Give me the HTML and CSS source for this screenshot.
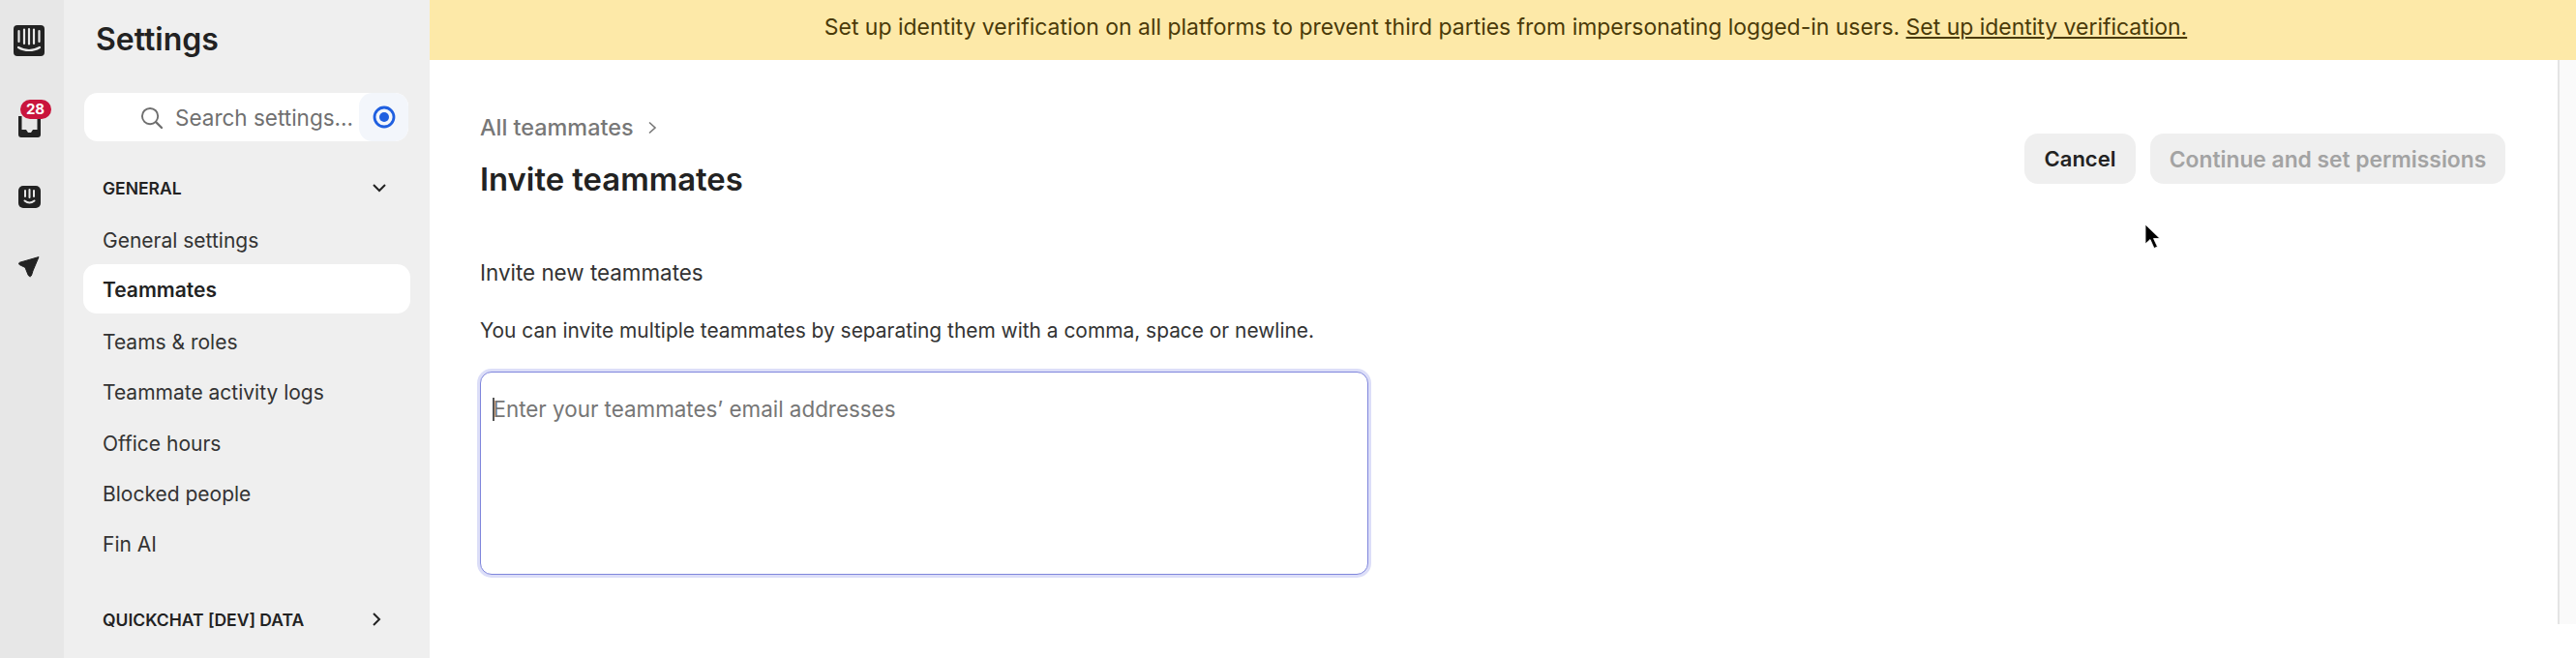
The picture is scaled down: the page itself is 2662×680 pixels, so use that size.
FILE: index.html
```html
<!DOCTYPE html>
<html lang="en">
<head>
<meta charset="utf-8">
<title>Settings</title>
<link rel="stylesheet" href="styles.css">
</head>
<body>
<div class="app">
  <nav class="rail">
    <svg class="rail-logo" viewBox="0 0 32 32" aria-hidden="true">
      <rect width="32" height="32" rx="4" fill="#222"/>
      <g stroke="#e7e7e7" stroke-width="2.2" stroke-linecap="round" fill="none">
        <path d="M5.5 6v11M11 4.5v14.5M16 4v15.5M21 4.5v14.5M26.500 6v11"/>
        <path d="M5 23c6.500 4 15.500 4 22 0"/>
      </g>
    </svg>
    <div class="rail-inbox">
      <svg class="rail-icon" viewBox="0 0 23 23" aria-hidden="true">
        <path d="M0 0h3.500v14h4.500l2 3h3l2-3h4.500V3H23v16a3 3 0 0 1-3 3H3a3 3 0 0 1-3-3z" fill="#222"/>
      </svg>
      <span class="badge">28</span>
    </div>
    <svg class="rail-icon rail-fin" viewBox="0 0 23 23" aria-hidden="true">
      <rect width="23" height="23" rx="5" fill="#222"/>
      <g stroke="#e7e7e7" stroke-width="2" stroke-linecap="round" fill="none">
        <path d="M7 5v6M11.500 4v8M16 5v6"/>
        <path d="M6.500 15.500c3 2.500 7 2.500 10 0"/>
      </g>
    </svg>
    <svg class="rail-icon rail-plane" viewBox="0 0 22 22" aria-hidden="true">
      <path d="M21 .6 1.500 6.200c-1.200.4-1.400 1.800-.3 2.400l5.800 2.800 3 7.500c.5 1.300 2.300 2.800 3.200 1.200 1-1.800 1.200-3.300 1.700-5z" fill="#222" stroke="#222" stroke-linejoin="round"/>
    </svg>
  </nav>

  <aside class="sidebar">
    <h1 class="sidebar-title">Settings</h1>
    <div class="search">
      <svg class="search-icon" viewBox="0 0 24 24" aria-hidden="true">
        <circle cx="10.500" cy="10.500" r="8.500" fill="none" stroke="#6f6f6f" stroke-width="2"/>
        <path d="M16.800 16.800 23 23" stroke="#6f6f6f" stroke-width="2.400" stroke-linecap="round"/>
      </svg>
      <span class="search-text">Search settings...</span>
      <span class="search-target">
        <svg viewBox="0 0 24 24" aria-hidden="true">
          <circle cx="12" cy="12" r="10" fill="none" stroke="#1f5fe0" stroke-width="2.800"/>
          <circle cx="12" cy="12" r="5" fill="#1f5fe0"/>
        </svg>
      </span>
    </div>
    <div class="section-head">
      <span>GENERAL</span>
      <svg class="chev" viewBox="0 0 14 14" aria-hidden="true"><path d="M1 4l6 6 6-6" fill="none" stroke="#222" stroke-width="2"/></svg>
    </div>
    <ul class="nav">
      <li>General settings</li>
      <li class="active">Teammates</li>
      <li>Teams &amp; roles</li>
      <li>Teammate activity logs</li>
      <li>Office hours</li>
      <li>Blocked people</li>
      <li>Fin AI</li>
    </ul>
    <div class="section-head section-data">
      <span>QUICKCHAT [DEV] DATA</span>
      <svg class="chev chev-right" viewBox="0 0 14 14" aria-hidden="true"><path d="M4 1l6 6-6 6" fill="none" stroke="#222" stroke-width="2"/></svg>
    </div>
  </aside>

  <div class="main">
    <div class="banner">
      <span>Set up identity verification on all platforms to prevent third parties from impersonating logged-in users. <a class="banner-link">Set up identity verification.</a></span>
    </div>
    <div class="body-row">
      <section class="content">
        <div class="head-row">
          <div>
            <div class="crumb">
              <span>All teammates</span>
              <svg viewBox="0 0 10 14" aria-hidden="true"><path d="M2 1.500 8 7l-6 5.500" fill="none" stroke="#777" stroke-width="1.600"/></svg>
            </div>
            <h2 class="page-title">Invite teammates</h2>
          </div>
          <div class="actions">
            <button class="btn btn-cancel" type="button">Cancel</button>
            <button class="btn btn-next" type="button">Continue and set permissions</button>
          </div>
        </div>
        <p class="label">Invite new teammates</p>
        <p class="hint">You can invite multiple teammates by separating them with a comma, space or newline.</p>
        <div class="field">
          <textarea class="input" placeholder="Enter your teammates’ email addresses"></textarea>
          <span class="caret"></span>
        </div>
      </section>
      <div class="scrolltrack"></div>
    </div>
    <svg class="cursor" viewBox="0 0 18 27" aria-hidden="true">
      <path d="M1 1v20l5-4.500 4 9 3.500-1.500-4-8.500H16z" fill="#000" stroke="#fff" stroke-width=".8"/>
    </svg>
  </div>
</div>
</body>
</html>
```
FILE: styles.css
```css
* { box-sizing: border-box; }
html, body { margin: 0; height: 100%; }
body {
  font-family: Inter, "Liberation Sans", sans-serif;
  color: #222;
  background: #fff;
  overflow: hidden;
}
.app { display: flex; width: 2662px; height: 680px; }

.rail {
  width: 66px;
  flex: none;
  background: #e7e7e7;
  display: flex;
  flex-direction: column;
  align-items: center;
  padding: 26px 6px 0 0;
}
.rail-logo { width: 32px; height: 32px; display: block; }
.rail-inbox { position: relative; width: 23px; height: 23px; margin-top: 62px; }
.rail-icon { width: 23px; height: 23px; display: block; }
.rail-fin { margin-top: 49px; }
.rail-plane { width: 22px; height: 22px; margin-top: 50px; }
.badge {
  position: absolute;
  left: 2px;
  top: -17px;
  width: 32px;
  height: 20px;
  border-radius: 10px;
  background: #c9143c;
  color: #fff;
  font-size: 15px;
  font-weight: 700;
  line-height: 20px;
  text-align: center;
}

.sidebar {
  width: 378px;
  flex: none;
  background: #efefef;
  padding: 0 20px;
}
.sidebar-title {
  margin: 0 0 0 13px;
  padding-top: 21px;
  font-size: 32px;
  line-height: 40px;
  font-weight: 600;
}
.search {
  margin-top: 35px;
  height: 50px;
  margin-left: 1px;
  margin-right: 2px;
  background: #fff;
  border-radius: 14px;
  display: flex;
  align-items: center;
  padding-left: 58px;
  overflow: hidden;
}
.search-icon { width: 23px; height: 23px; flex: none; }
.search-text { margin-left: 13px; font-size: 22.500px; color: #707070; flex: 1; white-space: nowrap; }
.search-target {
  width: 51px;
  height: 50px;
  flex: none;
  background: #f3f6fb;
  border-radius: 14px;
  display: flex;
  align-items: center;
  justify-content: center;
}
.search-target svg { width: 24px; height: 24px; display: block; }

.section-head {
  display: flex;
  align-items: center;
  justify-content: space-between;
  margin-top: 32px;
  padding: 0 25px 0 20px;
  height: 32px;
  font-size: 17.500px;
  font-weight: 600;
}
.chev { width: 14px; height: 14px; display: block; }
.section-data { margin-top: 34.500px; }
.chev-right { margin-right: 3px; }

.nav { list-style: none; margin: 12.500px 0 0; padding: 0; }
.nav li {
  height: 52.400px;
  line-height: 52px;
  padding-left: 20px;
  font-size: 21px;
  color: #333;
  border-radius: 14px;
}
.nav li.active {
  background: #fff;
  color: #222;
  font-weight: 600;
  height: 51.500px;
  line-height: 54px;
  margin: -2px 0 3.400px;
}

.main { flex: 1; min-width: 0; display: flex; flex-direction: column; position: relative; }
.banner {
  height: 62px;
  flex: none;
  background: #fde9a8;
  color: #4a3a08;
  font-size: 22.950px;
  padding: 0 0 7px 6px;
  display: flex;
  align-items: center;
  justify-content: center;
}
.banner-link { text-decoration: underline; }
.body-row { flex: 1; display: flex; min-height: 0; }
.content { flex: 1; min-width: 0; padding: 56px 54px 0 52px; }
.scrolltrack {
  width: 19px;
  flex: none;
  height: 583px;
  background: #fafafa;
  border-left: 2px solid #e4e4e4;
}
.head-row { display: flex; justify-content: space-between; align-items: flex-start; }
.crumb { display: flex; align-items: center; gap: 14px; font-size: 23.400px; font-weight: 500; color: #777; line-height: 28px; height: 28px; }
.crumb svg { width: 10px; height: 14px; display: block; }
.page-title { margin: 19px 0 0; font-size: 32.800px; line-height: 40px; font-weight: 600; color: #222; }
.actions { display: flex; gap: 15px; margin-top: 20px; }
.btn {
  font: inherit;
  font-size: 22px;
  font-weight: 600;
  height: 52px;
  border: 0;
  border-radius: 14px;
  background: #efefef;
  padding: 0;
}
.btn-cancel { color: #222; width: 115px; }
.btn-next { color: #a3a3a3; width: 367px; font-size: 22.800px; }
.label { margin: 63px 0 0; font-size: 22.400px; line-height: 28px; color: #333; }
.hint { margin: 32px 0 0; font-size: 20.900px; line-height: 28px; color: #333; }
.field { position: relative; width: 918px; height: 210px; margin-top: 27.500px; }
.input {
  display: block;
  width: 100%;
  height: 100%;
  resize: none;
  border: 1.500px solid #7f86dc;
  border-radius: 12px;
  box-shadow: 0 0 0 3px #dcdef8;
  outline: 0;
  padding: 24px 12.500px;
  font: inherit;
  font-size: 22.400px;
  line-height: 28px;
  background: #fff;
}
.input::placeholder { color: #767676; opacity: 1; }
.caret { position: absolute; left: 13px; top: 27px; width: 2px; height: 24px; background: #555; }
.cursor { position: absolute; left: 1772px; top: 231px; width: 18px; height: 27px; }
```
